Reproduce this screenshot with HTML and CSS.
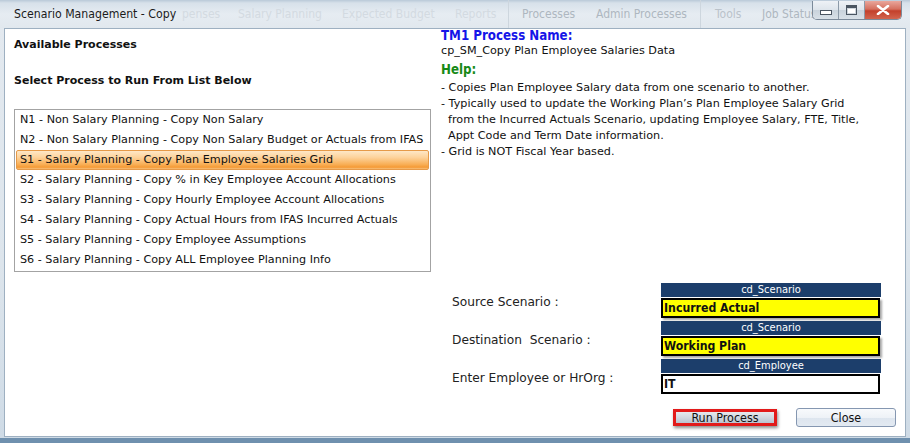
FILE: index.html
```html
<!doctype html>
<html lang="en">
 <head>
  <meta charset="utf-8">
  <title>Scenario Management - Copy</title>
  <link rel="stylesheet" href="styles.css">
 </head>
 <body>
  <div class="window">
   <div class="titlebar">
    <div class="ghost-menu">
     <span class="g-expenses">penses</span>
     <span class="g-salary">Salary Planning</span>
     <span class="g-budget">Expected Budget</span>
     <span class="g-reports">Reports</span>
     <span class="g-sep"></span>
     <span class="g-proc strong">Processes</span>
     <span class="g-admin strong">Admin Processes</span>
     <span class="g-sep"></span>
     <span class="g-tools">Tools</span>
     <span class="g-job strong">Job Status</span>
    </div>
    <span class="caption">Scenario Management - Copy</span>
    <div class="controls">
     <span class="ctl ctl-min"><i class="min-bar"></i></span>
     <span class="ctl ctl-max"><i class="max-box"></i></span>
     <span class="ctl ctl-close">
      <svg width="14" height="10" viewBox="0 0 14 10"><path d="M2 1 L12 9 M12 1 L2 9" stroke="#ffffff" stroke-width="2.6" stroke-linecap="round"/></svg>
     </span>
    </div>
   </div>

   <div class="client">
    <div class="left-pane">
     <div class="heading">Available Processes</div>
     <div class="heading heading-select">Select Process to Run From List Below</div>
     <div class="process-list">
      <div class="process-item">N1 - Non Salary Planning - Copy Non Salary</div>
      <div class="process-item">N2 - Non Salary Planning - Copy Non Salary Budget or Actuals from IFAS</div>
      <div class="process-item selected">S1 - Salary Planning - Copy Plan Employee Salaries Grid</div>
      <div class="process-item">S2 - Salary Planning - Copy % in Key Employee Account Allocations</div>
      <div class="process-item">S3 - Salary Planning - Copy Hourly Employee Account Allocations</div>
      <div class="process-item">S4 - Salary Planning - Copy Actual Hours from IFAS Incurred Actuals</div>
      <div class="process-item">S5 - Salary Planning - Copy Employee Assumptions</div>
      <div class="process-item">S6 - Salary Planning - Copy ALL Employee Planning Info</div>
     </div>
    </div>

    <div class="right-pane">
     <div class="info">
      <div class="info-title">TM1 Process Name:</div>
      <div class="info-line">cp_SM_Copy Plan Employee Salaries Data</div>
      <div class="help-title">Help:</div>
      <div class="info-line">- Copies Plan Employee Salary data from one scenario to another.</div>
      <div class="info-line">- Typically used to update the Working Plan’s Plan Employee Salary Grid</div>
      <div class="info-line cont">from the Incurred Actuals Scenario, updating Employee Salary, FTE, Title,</div>
      <div class="info-line cont">Appt Code and Term Date information.</div>
      <div class="info-line">- Grid is NOT Fiscal Year based.</div>
     </div>

     <div class="params">
      <div class="param">
       <div class="param-label">Source Scenario :</div>
       <div class="field">
        <div class="field-head">cd_Scenario</div>
        <div class="field-value yellow">Incurred Actual</div>
       </div>
      </div>
      <div class="param">
       <div class="param-label">Destination&nbsp; Scenario :</div>
       <div class="field">
        <div class="field-head">cd_Scenario</div>
        <div class="field-value yellow">Working Plan</div>
       </div>
      </div>
      <div class="param">
       <div class="param-label">Enter Employee or HrOrg :</div>
       <div class="field">
        <div class="field-head">cd_Employee</div>
        <div class="field-value">IT</div>
       </div>
      </div>
     </div>

     <div class="actions">
      <div class="run-frame"><button class="btn btn-run">Run Process</button></div>
      <button class="btn btn-close">Close</button>
     </div>
    </div>
   </div>
  </div>
 </body>
</html>
```

FILE: styles.css
```css
body {
	margin: 0;
	padding: 0;
	background: #6d8fae;
	font-family: "DejaVu Sans", sans-serif;
	font-size: 11px;
	color: #111;
}

.window {
	width: 910px;
	height: 443px;
	box-sizing: border-box;
	background: linear-gradient(to bottom, #cfdae5 0%, #e3e9ef 6%, #dde5ec 60%, #cfdbe6 100%);
	border-bottom: 5px solid #6f90ae;
	display: flex;
	flex-direction: column;
	overflow: hidden;
}

/* title bar with the blurred app menu behind it */
.titlebar {
	position: relative;
	height: 28px;
	flex: none;
	background: linear-gradient(to bottom, #b9c9d8 0px, #d7e1ea 3px, #e6ecf2 14px, #e1e8ee 28px);
}

.ghost-menu {
	position: absolute;
	top: 7px;
	left: 0;
	right: 0;
	height: 16px;
	font-family: "DejaVu Sans Condensed", "DejaVu Sans", sans-serif;
	font-size: 12px;
	color: #d3dae1;
	white-space: nowrap;
}

.ghost-menu > span {
	position: absolute;
	top: 0;
}

.ghost-menu .strong {
	color: #aeb7c0;
}

.g-expenses { left: 182px; }
.g-salary { left: 238px; }
.g-budget { left: 342px; }
.g-reports { left: 455px; }
.g-proc { left: 522px; }
.g-admin { left: 596px; }
.ghost-menu .g-tools { left: 715px; color: #bac2ca; }
.g-job { left: 762px; }

.ghost-menu .g-sep {
	top: -7px;
	width: 1px;
	height: 28px;
	background: #cdd6de;
}

.g-sep:nth-of-type(5) { left: 508px; }
.g-sep:nth-of-type(8) { left: 700px; }

.caption {
	position: absolute;
	left: 8px;
	top: 6px;
	padding: 1px 6px;
	font-family: "DejaVu Sans Condensed", "DejaVu Sans", sans-serif;
	font-size: 12.2px;
	color: #1b1b1b;
}

.controls {
	position: absolute;
	top: 1px;
	right: 8px;
	display: flex;
	height: 18px;
	border: 1px solid #7b8a9a;
	border-top: none;
	border-radius: 0 0 5px 5px;
	overflow: hidden;
}

.ctl {
	display: flex;
	align-items: center;
	justify-content: center;
	width: 25px;
	background: linear-gradient(to bottom, #eef2f6 0%, #dde4eb 50%, #c9d3dc 51%, #d8e0e7 100%);
	border-right: 1px solid #8c9aa8;
}

.ctl-close {
	width: 36px;
	border-right: none;
	background: linear-gradient(to bottom, #e9a79c 0%, #d5705f 45%, #c3402b 55%, #d2654f 100%);
}

.min-bar {
	display: block;
	width: 10px;
	height: 3px;
	margin-top: 5px;
	background: #fff;
	border: 1px solid #4a5561;
}

.max-box {
	display: block;
	width: 9px;
	height: 6px;
	border: 1px solid #4a5561;
	border-top-width: 3px;
	background: #fff;
	box-shadow: inset 0 0 0 1px #cfd6dd;
}

/* white client area */
.client {
	flex: 1;
	margin: 0 4px 1px 4px;
	background: #fff;
	border: 1px solid #9eb0c1;
	display: flex;
}

.left-pane {
	width: 427px;
	padding: 8px 0 0 9px;
}

.heading {
	font-weight: bold;
	line-height: 16px;
}

.heading-select {
	margin-top: 20px;
}

.process-list {
	margin-top: 20px;
	width: 417px;
	box-sizing: border-box;
	border: 1px solid #a3a3a3;
	padding: 0 1px 1px 1px;
}

.process-item {
	height: 20px;
	padding-left: 3px;
	white-space: nowrap;
	border: 1px solid transparent;
	box-sizing: border-box;
	line-height: 18px;
	font-size: 11.2px;
}

.process-item.selected {
	border-color: #e69a48;
	border-radius: 2px;
	background: linear-gradient(to bottom, #fee7c6 0%, #fdd39c 35%, #f8ae55 75%, #f59a35 90%, #f8c07a 100%);
}

.right-pane {
	flex: 1;
	display: flex;
	flex-direction: column;
}

.info-title {
	font-family: "DejaVu Sans Condensed", "DejaVu Sans", sans-serif;
	font-size: 13.2px;
	font-weight: bold;
	color: #1515e8;
	line-height: 14px;
}

.help-title {
	font-family: "DejaVu Sans Condensed", "DejaVu Sans", sans-serif;
	font-size: 13.2px;
	font-weight: bold;
	color: #178a17;
	line-height: 20px;
	margin-top: 1px;
}

.info-line {
	line-height: 16px;
	white-space: nowrap;
	font-size: 11.2px;
}

.info-line.cont {
	padding-left: 7px;
}

.params {
	margin-top: 123px;
	display: flex;
	flex-direction: column;
	gap: 3px;
}

.param {
	display: flex;
	align-items: center;
}

.param-label {
	width: 220px;
	padding-left: 11px;
	box-sizing: border-box;
	font-size: 12.2px;
	color: #222;
	padding-top: 3px;
}

.field {
	width: 220px;
}

.field-head {
	height: 14px;
	line-height: 14px;
	background: #1c3e6b;
	color: #fff;
	text-align: center;
	font-family: "DejaVu Sans Condensed", "DejaVu Sans", sans-serif;
	font-size: 11px;
}

.field-value {
	height: 20px;
	margin-top: 1px;
	margin-right: 1px;
	box-sizing: border-box;
	border: 2px solid #000;
	background: #fff;
	padding-left: 1px;
	font-family: "DejaVu Sans Condensed", "DejaVu Sans", sans-serif;
	font-size: 12.2px;
	font-weight: bold;
	line-height: 16px;
}

.field-value.yellow {
	background: #ffff00;
	box-shadow: 2px 2px 2px rgba(0, 0, 0, 0.35);
}

.actions {
	margin-top: 14px;
	display: flex;
	align-items: center;
	justify-content: flex-end;
	gap: 19px;
	padding-right: 9px;
}

.btn {
	font-family: "DejaVu Sans Condensed", "DejaVu Sans", sans-serif;
	font-size: 12.4px;
	color: #111;
	padding: 0;
	cursor: default;
}

.run-frame {
	border: 3px solid #e21a1a;
	box-shadow: 1px 2px 3px rgba(0, 0, 0, 0.45);
	display: flex;
}

.btn-run {
	width: 98px;
	height: 11px;
	line-height: 11px;
	border: none;
	background: linear-gradient(to bottom, #e6e9ee 0%, #d2d8e0 50%, #b9c3d0 100%);
	overflow: visible;
}

.btn-close {
	width: 100px;
	height: 19px;
	border: 1px solid #8597b1;
	border-radius: 3px;
	background: linear-gradient(to bottom, #f8fafc 0%, #eef2f7 50%, #dde5ee 51%, #e3eaf2 100%);
}
```
